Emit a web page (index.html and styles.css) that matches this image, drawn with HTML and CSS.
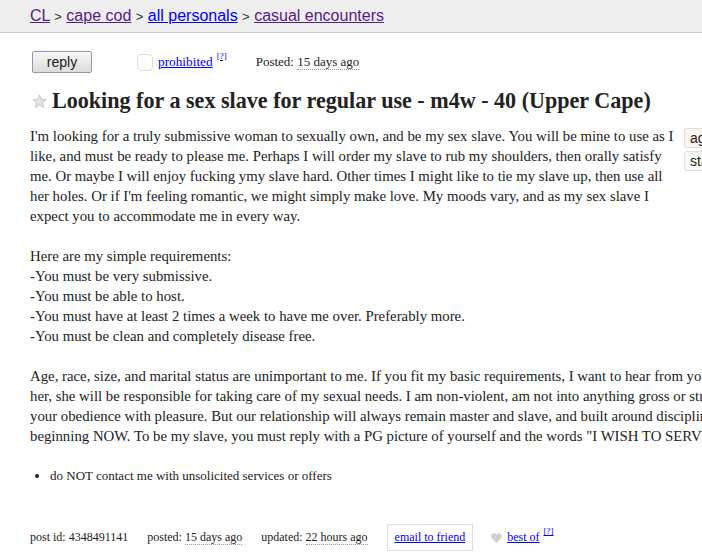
FILE: index.html
```html
<!DOCTYPE html>
<html lang="en">
<head>
    <meta charset="UTF-8">
    <meta name="viewport" content="width=device-width, initial-scale=1.0">
    <link rel="stylesheet" href="styles.css">
    <title>Looking for a sex slave for regular use - m4w - 40 (Upper Cape)</title>
</head>
<body>
    <!-- barra de navegacao -->
    <header class="topbar">
        <a class="crumb" href="#">CL</a> <span class="sep">&gt;</span>
        <a class="crumb" href="#">cape cod</a> <span class="sep">&gt;</span>
        <a class="crumb fresh" href="#">all personals</a> <span class="sep">&gt;</span>
        <a class="crumb" href="#">casual encounters</a>
    </header>

    <section class="posting">
        <div class="actions">
            <button class="reply">reply</button>
            <span class="flag">
                <span class="flagbox"></span>
                <a class="flaglink" href="#">prohibited</a><sup><a href="#">[?]</a></sup>
            </span>
            <span class="posted">Posted: <time>15 days ago</time></span>
        </div>

        <h2 class="title">
            <svg class="star" width="15" height="15" viewBox="0 0 24 24">
                <path d="M12 1.5l3.1 6.9 7.4.7-5.6 5 1.7 7.4L12 17.6l-6.6 3.9 1.7-7.4-5.6-5 7.4-.7z" fill="#e4e4e4" stroke="#bdbdbd" stroke-width="1.3"/>
            </svg>
            Looking for a sex slave for regular use - m4w - 40 (Upper Cape)
        </h2>

        <div class="userbody">
            <aside class="attrs">
                <p class="attr age">age: 40</p>
                <p class="attr status">status: single</p>
            </aside>
            <div class="body">
                I'm looking for a truly submissive woman to sexually own, and be my sex slave. You will be mine to use as I like, and must be ready to please me. Perhaps I will order my slave to rub my shoulders, then orally satisfy me. Or maybe I will enjoy fucking ymy slave hard. Other times I might like to tie my slave up, then use all her holes. Or if I'm feeling romantic, we might simply make love. My moods vary, and as my sex slave I expect you to accommodate me in every way.<br>
                <br>
                Here are my simple requirements:<br>
                -You must be very submissive.<br>
                -You must be able to host.<br>
                -You must have at least 2 times a week to have me over. Preferably more.<br>
                -You must be clean and completely disease free.<br>
                <br>
                Age, race, size, and marital status are unimportant to me. If you fit my basic requirements, I want to hear from you. If I find the right woman and choose<br>
                her, she will be responsible for taking care of my sexual needs. I am non-violent, am not into anything gross or strange, and I will reward<br>
                your obedience with pleasure. But our relationship will always remain master and slave, and built around discipline and respect,<br>
                beginning NOW. To be my slave, you must reply with a PG picture of yourself and the words "I WISH TO SERVE YOU".
            </div>
            <ul class="notices">
                <li>do NOT contact me with unsolicited services or offers</li>
            </ul>
        </div>

        <footer class="postinginfo">
            <span>post id: 4348491141</span>
            <span>posted: <time>15 days ago</time></span>
            <span>updated: <time>22 hours ago</time></span>
            <a class="mail" href="#">email to friend</a>
            <span class="bestof">
                <svg class="heart" width="11" height="10" viewBox="0 0 22 20">
                    <path d="M11 20L2.5 11.5C-.5 8.5 0 3 3.5 1.2 6.5-.3 9.5 1 11 3.8 12.5 1 15.5-.3 18.5 1.2 22 3 22.5 8.5 19.5 11.5z" fill="#d0d0d0"/>
                </svg>
                <a href="#">best of</a><sup><a href="#">[?]</a></sup>
            </span>
        </footer>
    </section>
</body>
</html>
```

FILE: styles.css
```css
:root {
    --texto: #222;
    --link: #00f;
    --visitado: #551a8b;
    --borda: #ddd;
}
body {
    margin: 0;
    overflow: hidden;
    background-color: #fff;
    font-family: "Liberation Serif", "Times New Roman", serif;
    color: var(--texto);
}
a {
    color: var(--link);
}
time {
    border-bottom: 1px dotted #999;
}
sup {
    font-size: 9px;
    margin-left: 4px;
}
/* topo */
.topbar {
    height: 32px;
    line-height: 32px;
    padding-left: 30px;
    background-color: #eee;
    border-bottom: 1px solid #ccc;
    font-family: "Liberation Sans", Arial, sans-serif;
    font-size: 16px;
}
.crumb {
    color: var(--visitado);
}
.crumb.fresh {
    color: var(--link);
}
.sep {
    font-size: 13px;
    color: #333;
}
/* anuncio */
.posting {
    padding: 18px 30px 0;
}
.actions {
    display: flex;
    align-items: center;
    height: 22px;
    font-size: 13px;
}
.reply {
    width: 60px;
    height: 22px;
    margin-left: 2px;
    padding: 0;
    border: 1px solid #999;
    border-radius: 2px;
    background: linear-gradient(#f8f8f8, #dcdcdc);
    font-family: "Liberation Sans", Arial, sans-serif;
    font-size: 14px;
    color: var(--texto);
}
.flag {
    display: flex;
    align-items: center;
    margin-left: 45px;
}
.flagbox {
    width: 14px;
    height: 15px;
    margin-right: 5px;
    border: 1px solid var(--borda);
    border-radius: 4px;
}
.flaglink {
    font-size: 13.3px;
}
.flag sup {
    align-self: flex-start;
    margin-top: -3px;
}
.posted {
    margin-left: 29px;
}
.title {
    display: flex;
    align-items: center;
    gap: 5px;
    margin: 15px 0 0;
    font-size: 22.1px;
    line-height: 26px;
}
.star {
    margin-left: 2px;
    flex: none;
}
.userbody {
    width: 1100px;
    margin-top: 12px;
}
.attrs {
    float: right;
    width: 446px;
    height: 220px;
    margin-left: 4px;
    margin-top: 2px;
}
.attr {
    margin: 0 0 3px;
    height: 18px;
    line-height: 18px;
    padding: 0 5px;
    border: 1px solid var(--borda);
    border-radius: 3px;
    font-family: "Liberation Sans", Arial, sans-serif;
    font-size: 14px;
}
.attr.age {
    background-color: #fdf6ef;
}
.attr.status {
    background-color: #f7faf4;
}
.body {
    font-size: 14.8px;
    line-height: 20px;
}
.notices {
    clear: both;
    margin: 21px 0 0;
    padding-left: 20px;
    font-size: 13px;
    line-height: 18px;
}
/* rodape */
.postinginfo {
    display: flex;
    align-items: center;
    gap: 19px;
    margin-top: 39px;
    font-size: 12px;
}
.mail {
    padding: 5px 7px;
    border: 1px solid var(--borda);
}
.bestof {
    display: flex;
    align-items: center;
    margin-left: -1px;
}
.heart {
    margin-right: 5px;
}
.bestof sup {
    align-self: flex-start;
    margin-top: -4px;
}
```
